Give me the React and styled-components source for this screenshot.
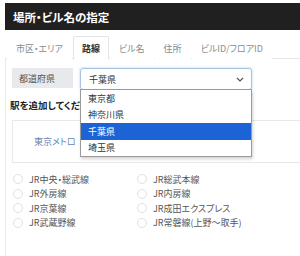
import React from "react";
import styled, { createGlobalStyle } from "styled-components";

const Global = createGlobalStyle`
  body {
    margin: 0;
    background: #fff;
    overflow: hidden;
    font-family: "Noto Sans CJK JP", "Noto Sans", sans-serif;
    font-feature-settings: "palt";
  }
`;

const Page = styled.div`
  padding: 3px 0 0 5px;
  height: 253px;
  display: flex;
  flex-flow: column;
`;

const Header = styled.div`
  height: 27px;
  background: #202020;
  color: #fff;
  display: flex;
  align-items: center;
  padding-left: 8px;
  font-size: 11.5px;
  font-weight: 700;
`;

const Tabs = styled.div`
  display: flex;
  margin-top: 6px;
  padding-left: 2px;
  gap: 1px;
  height: 22px;
  border-bottom: 1px solid #e6e6e6;
`;

const Tab = styled.div`
  padding: 0 8px;
  display: flex;
  align-items: center;
  font-size: 9px;
  color: ${p => (p.active ? "#333" : "#8c8c8c")};
  font-weight: ${p => (p.active ? 700 : 400)};
  background: #fff;
  border: 1px solid ${p => (p.active ? "#e3e3e3" : "transparent")};
  border-bottom: none;
  border-radius: 2px 2px 0 0;
  margin-bottom: -1px;
  height: 23px;
  box-sizing: border-box;
`;

const Content = styled.div`
  flex: 1;
  border-left: 1px solid #ececec;
  padding: 9px 0 0 4px;
`;

const Row = styled.div`
  display: flex;
  gap: 7px;
  margin-left: 2px;
`;

const Label = styled.div`
  width: 61px;
  height: 20px;
  background: #e7e9ec;
  color: #555;
  font-size: 9px;
  display: flex;
  align-items: center;
  padding-left: 7px;
  box-sizing: border-box;
`;

const SelectWrap = styled.div`
  position: relative;
  width: 172px;
`;

const Select = styled.div`
  height: 22px;
  border: 1px solid #a9c1e3;
  border-radius: 3px;
  box-shadow: 0 0 2px 1px #dce8f7;
  box-sizing: border-box;
  display: flex;
  align-items: center;
  justify-content: space-between;
  padding: 0 7px 0 8px;
  font-size: 9px;
  color: #333;
`;

const Menu = styled.div`
  position: absolute;
  top: 21px;
  left: 0;
  right: 0;
  background: #fff;
  border: 1px solid #9a9a9a;
  box-shadow: 1px 2px 3px rgba(0, 0, 0, 0.18);
  z-index: 2;
`;

const Option = styled.div`
  height: 16.5px;
  display: flex;
  align-items: center;
  padding-left: 7px;
  font-size: 9px;
  color: ${p => (p.selected ? "#fff" : "#333")};
  background: ${p => (p.selected ? "#1c63d5" : "#fff")};
`;

const Heading = styled.div`
  margin-top: 8px;
  font-size: 9.5px;
  font-weight: 700;
  color: #222;
`;

const Lines = styled.div`
  margin: 8px 0 0 2px;
  border: 1px solid #e8e8e8;
  border-right: none;
  padding: 10px 0 11px 10px;
  display: flex;
`;

const LineTab = styled.div`
  height: 20px;
  padding: 0 11px;
  display: flex;
  align-items: center;
  font-size: 9px;
  color: ${p => (p.active ? "#fff" : "#6b84b3")};
  background: ${p => (p.active ? "#1f5fc4" : "transparent")};
  border-radius: 3px;
`;

const List = styled.div`
  display: grid;
  grid-template-columns: 124px 124px;
  margin: 9px 0 0 3px;
`;

const Item = styled.label`
  display: flex;
  align-items: center;
  gap: 6px;
  height: 14.5px;
  font-size: 9px;
  color: #555;
`;

const Radio = styled.span`
  width: 8px;
  height: 8px;
  border: 1px solid #e0e0e0;
  border-radius: 50%;
  background: #fff;
`;

const prefs = ["東京都", "神奈川県", "千葉県", "埼玉県"];

const left = ["JR中央・総武線", "JR外房線", "JR京葉線", "JR武蔵野線"];
const right = ["JR総武本線", "JR内房線", "JR成田エクスプレス", "JR常磐線(上野～取手)"];

export default function App() {
  const rows = [];
  left.forEach((name, i) => {
    rows.push(name, right[i]);
  });

  return (
    <>
      <Global />
      <Page>
        <Header>場所・ビル名の指定</Header>
        <Tabs>
          <Tab>市区・エリア</Tab>
          <Tab active>路線</Tab>
          <Tab>ビル名</Tab>
          <Tab>住所</Tab>
          <Tab>ビルID/フロアID</Tab>
        </Tabs>
        <Content>
          <Row>
            <Label>都道府県</Label>
            <SelectWrap>
              <Select>
                <span>千葉県</span>
                <svg width="8" height="5" viewBox="0 0 8 5">
                  <polyline points="1,1 4,4 7,1" fill="none" stroke="#555" strokeWidth="1.2" />
                </svg>
              </Select>
              <Menu>
                {prefs.map(p => (
                  <Option key={p} selected={p === "千葉県"}>{p}</Option>
                ))}
              </Menu>
            </SelectWrap>
          </Row>
          <Heading>駅を追加してください</Heading>
          <Lines>
            <LineTab>東京メトロ</LineTab>
            <LineTab active>JR</LineTab>
          </Lines>
          <List>
            {rows.map(name => (
              <Item key={name}>
                <Radio />
                {name}
              </Item>
            ))}
          </List>
        </Content>
      </Page>
    </>
  );
}
